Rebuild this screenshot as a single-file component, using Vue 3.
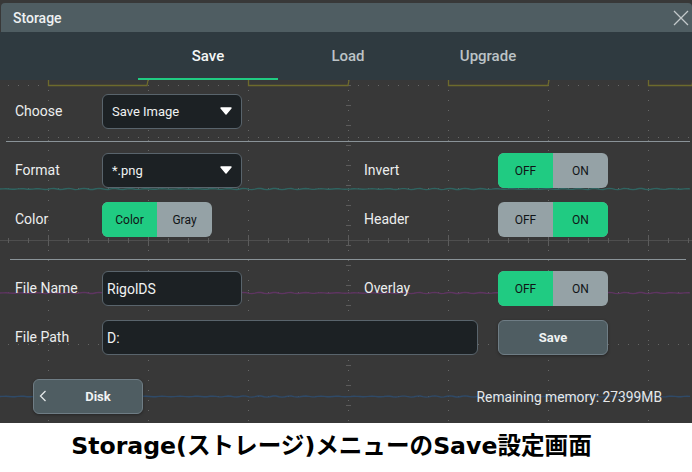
<script setup>
const dotX = [48, 148, 248, 348, 448, 548, 648]
const dotY = [85, 137, 188, 292, 344, 396]
const ticksX = Array.from({ length: 35 }, (_, i) => 8 + i * 20)
const ticksY = Array.from({ length: 17 }, (_, i) => 85 + i * 20)
const wave = (y, amp = 0.4) => {
  let d = `M0 ${y}`
  for (let x = 3; x <= 692; x += 3) d += ` L${x} ${(y + Math.sin(x * 1.7) * amp + Math.sin(x * 0.43) * amp * 0.6).toFixed(1)}`
  return d
}
const pulses = [[48, 147], [248, 348], [448, 548], [648, 692]]
</script>

<template>
  <div class="page">
    <div class="scope">
      <svg class="grid" width="692" height="423" viewBox="0 0 692 423" aria-hidden="true">
        <g stroke="#666" stroke-width="1" stroke-dasharray="1 9">
          <line v-for="x in dotX" :key="'v' + x" :x1="x + 0.5" y1="80" :x2="x + 0.5" y2="423" />
          <line v-for="y in dotY" :key="'h' + y" x1="8" :y1="y + 0.5" x2="692" :y2="y + 0.5" />
        </g>
        <line x1="0" y1="240.5" x2="692" y2="240.5" stroke="#4e4e4e" />
        <g stroke="#5c5c5c">
          <line v-for="x in ticksX" :key="'tx' + x" :x1="x + 0.5" y1="238" :x2="x + 0.5" y2="243" />
          <line v-for="y in ticksY" :key="'ty' + y" x1="346" :y1="y + 0.5" x2="351" :y2="y + 0.5" />
          <line v-for="x in dotX" :key="'mx' + x" :x1="x + 0.5" y1="235" :x2="x + 0.5" y2="246" />
        </g>
        <g fill="none" stroke="#6d6a2c" stroke-width="1.3">
          <path v-for="p in pulses" :key="p[0]" :d="`M${p[0] + 0.5} 80 V85.5 H${p[1]} L${p[1] + 1} 80`" />
        </g>
        <path :d="wave(189)" fill="none" stroke="#2f6461" stroke-width="1.4" />
        <path :d="wave(293)" fill="none" stroke="#5e3561" stroke-width="1.4" />
        <path :d="wave(396.5)" fill="none" stroke="#2f4a68" stroke-width="1.4" />
      </svg>

      <header class="title-bar">
        <span class="title">Storage</span>
        <svg class="close" width="16" height="16" viewBox="0 0 16 16" aria-hidden="true">
          <path d="M1 1 L15 15 M15 1 L1 15" stroke="#c3c9cb" stroke-width="1.3" fill="none" />
        </svg>
      </header>

      <nav class="tabs">
        <div class="tab active">Save</div>
        <div class="tab">Load</div>
        <div class="tab">Upgrade</div>
      </nav>

      <main class="form">
        <div class="row first">
          <span class="label">Choose</span>
          <div class="field select">Save Image<svg class="caret" width="12" height="8" viewBox="0 0 12 8" aria-hidden="true"><path d="M1 1 H11 L6 7 Z" fill="#fff" stroke="#fff" stroke-width="1.4" stroke-linejoin="round" /></svg></div>
        </div>
        <hr class="rule top-rule" />
        <div class="row">
          <span class="label">Format</span>
          <div class="field select">*.png<svg class="caret" width="12" height="8" viewBox="0 0 12 8" aria-hidden="true"><path d="M1 1 H11 L6 7 Z" fill="#fff" stroke="#fff" stroke-width="1.4" stroke-linejoin="round" /></svg></div>
          <span class="label">Invert</span>
          <div class="toggle"><span class="on">OFF</span><span>ON</span></div>
        </div>
        <div class="row gap">
          <span class="label">Color</span>
          <div class="toggle"><span class="on">Color</span><span>Gray</span></div>
          <span class="label">Header</span>
          <div class="toggle"><span>OFF</span><span class="on">ON</span></div>
        </div>
        <hr class="rule low-rule" />
        <div class="row">
          <span class="label">File Name</span>
          <div class="field text">RigolDS</div>
          <span class="label">Overlay</span>
          <div class="toggle"><span class="on">OFF</span><span>ON</span></div>
        </div>
        <div class="row gap">
          <span class="label">File Path</span>
          <div class="field text wide">D:</div>
          <button class="btn save">Save</button>
        </div>
        <div class="foot">
          <button class="btn disk">
            <svg class="chev" width="8" height="12" viewBox="0 0 8 12" aria-hidden="true">
              <path d="M6.5 1 L1.5 6 L6.5 11" fill="none" stroke="#e4e8e9" stroke-width="1.3" />
            </svg>
            Disk
          </button>
          <span class="memory">Remaining memory: 27399MB</span>
        </div>
      </main>
    </div>
    <div class="caption">Storage(ストレージ)メニューのSave設定画面</div>
  </div>
</template>

<style>
html, body { margin: 0; background: #fff; }
</style>

<style scoped>
.page {
  width: 692px;
  height: 472px;
  overflow: hidden;
  background: #fff;
  font-family: Roboto, "Liberation Sans", sans-serif;
}
.scope {
  position: relative;
  height: 423px;
  padding-top: 3px;
  box-sizing: border-box;
  background: #383838;
}
.grid { position: absolute; left: 0; top: 0; }
.title-bar {
  position: relative;
  height: 29px;
  margin-left: 1px;
  padding: 0 3px 0 12px;
  display: flex;
  align-items: center;
  justify-content: space-between;
  border-radius: 4px 4px 0 0;
  background: #4f5d62;
}
.title { color: #eef1f2; font-size: 14px; font-weight: 500; }
.tabs {
  position: relative;
  height: 48px;
  padding-left: 138px;
  display: flex;
  background: #2f3a40;
}
.tab {
  box-sizing: border-box;
  width: 140px;
  height: 48px;
  padding-top: 2px;
  border-bottom: 2px solid transparent;
  display: flex;
  align-items: center;
  justify-content: center;
  color: #bcc3c6;
  font-size: 15px;
  font-weight: 500;
}
.tab.active { color: #f4f6f6; border-bottom-color: #20cb82; }
.form { position: relative; padding-left: 15px; }
.row {
  display: grid;
  grid-template-columns: 87px 262px 134px 110px;
  height: 35px;
  align-items: center;
}
.row.first { margin-top: 14px; }
.row.gap { margin-top: 14px; }
.label { color: #eceeee; font-size: 14px; padding-bottom: 2px; }
.field {
  box-sizing: border-box;
  height: 35px;
  width: 140px;
  display: flex;
  align-items: center;
  justify-content: space-between;
  background: #1c2124;
  border: 1px solid #59646c;
  border-radius: 6px;
  color: #f0f2f2;
  font-size: 13px;
}
.select { padding: 0 9px 0 9px; }
.text { padding: 0 4px; font-size: 14px; }
.wide { width: 376px; }
.caret { margin-top: -2px; }
.rule { height: 1px; border: 0; background: #8a9398; }
.top-rule { margin: 12px 2px 11px -9px; width: 684px; }
.low-rule { margin: 22px 0 11px -5px; width: 676px; }
.toggle {
  width: 110px;
  height: 35px;
  display: grid;
  grid-template-columns: 55px 55px;
  border-radius: 6px;
  overflow: hidden;
  background: #95a2a6;
  color: #101416;
  font-size: 12px;
}
.toggle span { display: flex; align-items: center; justify-content: center; }
.toggle .on { background: #20cb82; }
.btn {
  box-sizing: border-box;
  width: 110px;
  height: 35px;
  padding: 0;
  background: #4f5d62;
  border: 1px solid #6f7d85;
  border-radius: 6px;
  box-shadow: 0 1px 3px rgba(0, 0, 0, 0.35);
  color: #f0f3f3;
  font-family: inherit;
  font-size: 13px;
  font-weight: 700;
}
.save { grid-column: 4; }
.row.gap .text { grid-column: 2 / 4; }
.foot {
  margin-top: 24px;
  margin-left: 18px;
  width: 629px;
  display: flex;
  align-items: center;
  justify-content: space-between;
}
.disk { position: relative; padding-left: 20px; }
.chev { position: absolute; left: 5px; top: 10px; }
.memory { color: #e6e8e9; font-size: 13.8px; }
.caption {
  height: 49px;
  line-height: 46px;
  text-align: center;
  color: #000;
  font-family: "DejaVu Sans", "Noto Sans CJK JP", sans-serif;
  font-size: 23.6px;
  font-weight: 700;
  padding-right: 29px;
  white-space: nowrap;
}
</style>
